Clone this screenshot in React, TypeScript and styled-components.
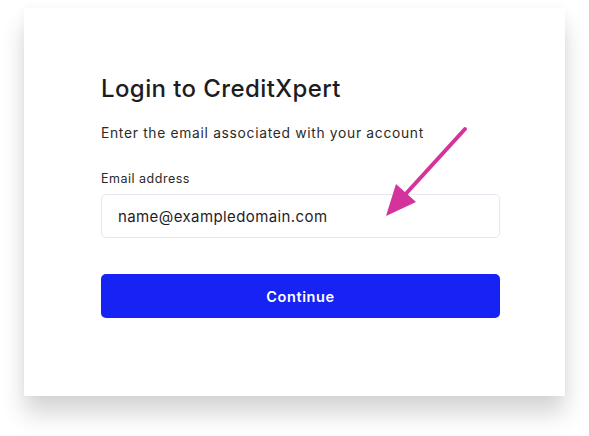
import styled, { createGlobalStyle } from 'styled-components';

const GlobalStyle = createGlobalStyle`
  html, body {
    margin: 0;
    padding: 0;
    background: #ffffff;
  }
  body {
    font-family: 'Inter', 'Noto Sans', sans-serif;
    color: #1c1c1c;
  }
`;

const Page = styled.div`
  width: 589px;
  height: 436px;
  padding: 8px 24px 0 24px;
  box-sizing: border-box;
  overflow: hidden;
`;

const Card = styled.div`
  position: relative;
  width: 541px;
  height: 388px;
  background: #ffffff;
  box-shadow: 0 18px 22px rgba(0, 0, 0, 0.16), 0 0 10px rgba(0, 0, 0, 0.04);
  padding: 66px 65px 0 77px;
  box-sizing: border-box;
`;

const Title = styled.h1`
  margin: 0;
  font-size: 24px;
  font-weight: 500;
  line-height: 30px;
  color: #1d1d1f;
  letter-spacing: 0.4px;
`;

const Subtitle = styled.p`
  margin: 19px 0 0;
  font-size: 13.8px;
  line-height: 20px;
  color: #2a2a2a;
  letter-spacing: 0.7px;
`;

const Form = styled.form`
  display: flex;
  flex-direction: column;
  margin-top: 27px;
`;

const Label = styled.label`
  font-size: 12.5px;
  line-height: 18px;
  color: #2a2a2a;
  letter-spacing: 0.5px;
`;

const Input = styled.input`
  margin-top: 6px;
  height: 44px;
  border: 1px solid #e6e6f0;
  border-radius: 5px;
  padding: 0 16px;
  box-sizing: border-box;
  font-family: inherit;
  font-size: 15px;
  color: #1d1d1f;
  letter-spacing: 0.4px;
  outline: none;
  &::placeholder {
    color: #1d1d1f;
    opacity: 1;
  }
`;

const Button = styled.button`
  margin-top: 36px;
  height: 44px;
  border: none;
  border-radius: 5px;
  background: #1722f5;
  color: #ffffff;
  font-family: inherit;
  font-size: 14.5px;
  font-weight: 600;
  letter-spacing: 0.6px;
  cursor: pointer;
`;

const Arrow = styled.svg`
  position: absolute;
  left: 358px;
  top: 118px;
  width: 90px;
  height: 95px;
  pointer-events: none;
`;

export default function App() {
  return (
    <>
      <GlobalStyle />
      <Page>
        <Card>
          <Title>Login to CreditXpert</Title>
          <Subtitle>Enter the email associated with your account</Subtitle>
          <Form onSubmit={(e) => e.preventDefault()}>
            <Label htmlFor="email">Email address</Label>
            <Input id="email" type="email" placeholder="name@exampledomain.com" />
            <Button type="submit">Continue</Button>
          </Form>
          <Arrow viewBox="0 0 90 95">
            <line x1="83" y1="3" x2="20" y2="72" stroke="#d3339b" strokeWidth="4" strokeLinecap="round" />
            <polygon points="4,90 14,58 34,76" fill="#d3339b" />
          </Arrow>
        </Card>
      </Page>
    </>
  );
}
